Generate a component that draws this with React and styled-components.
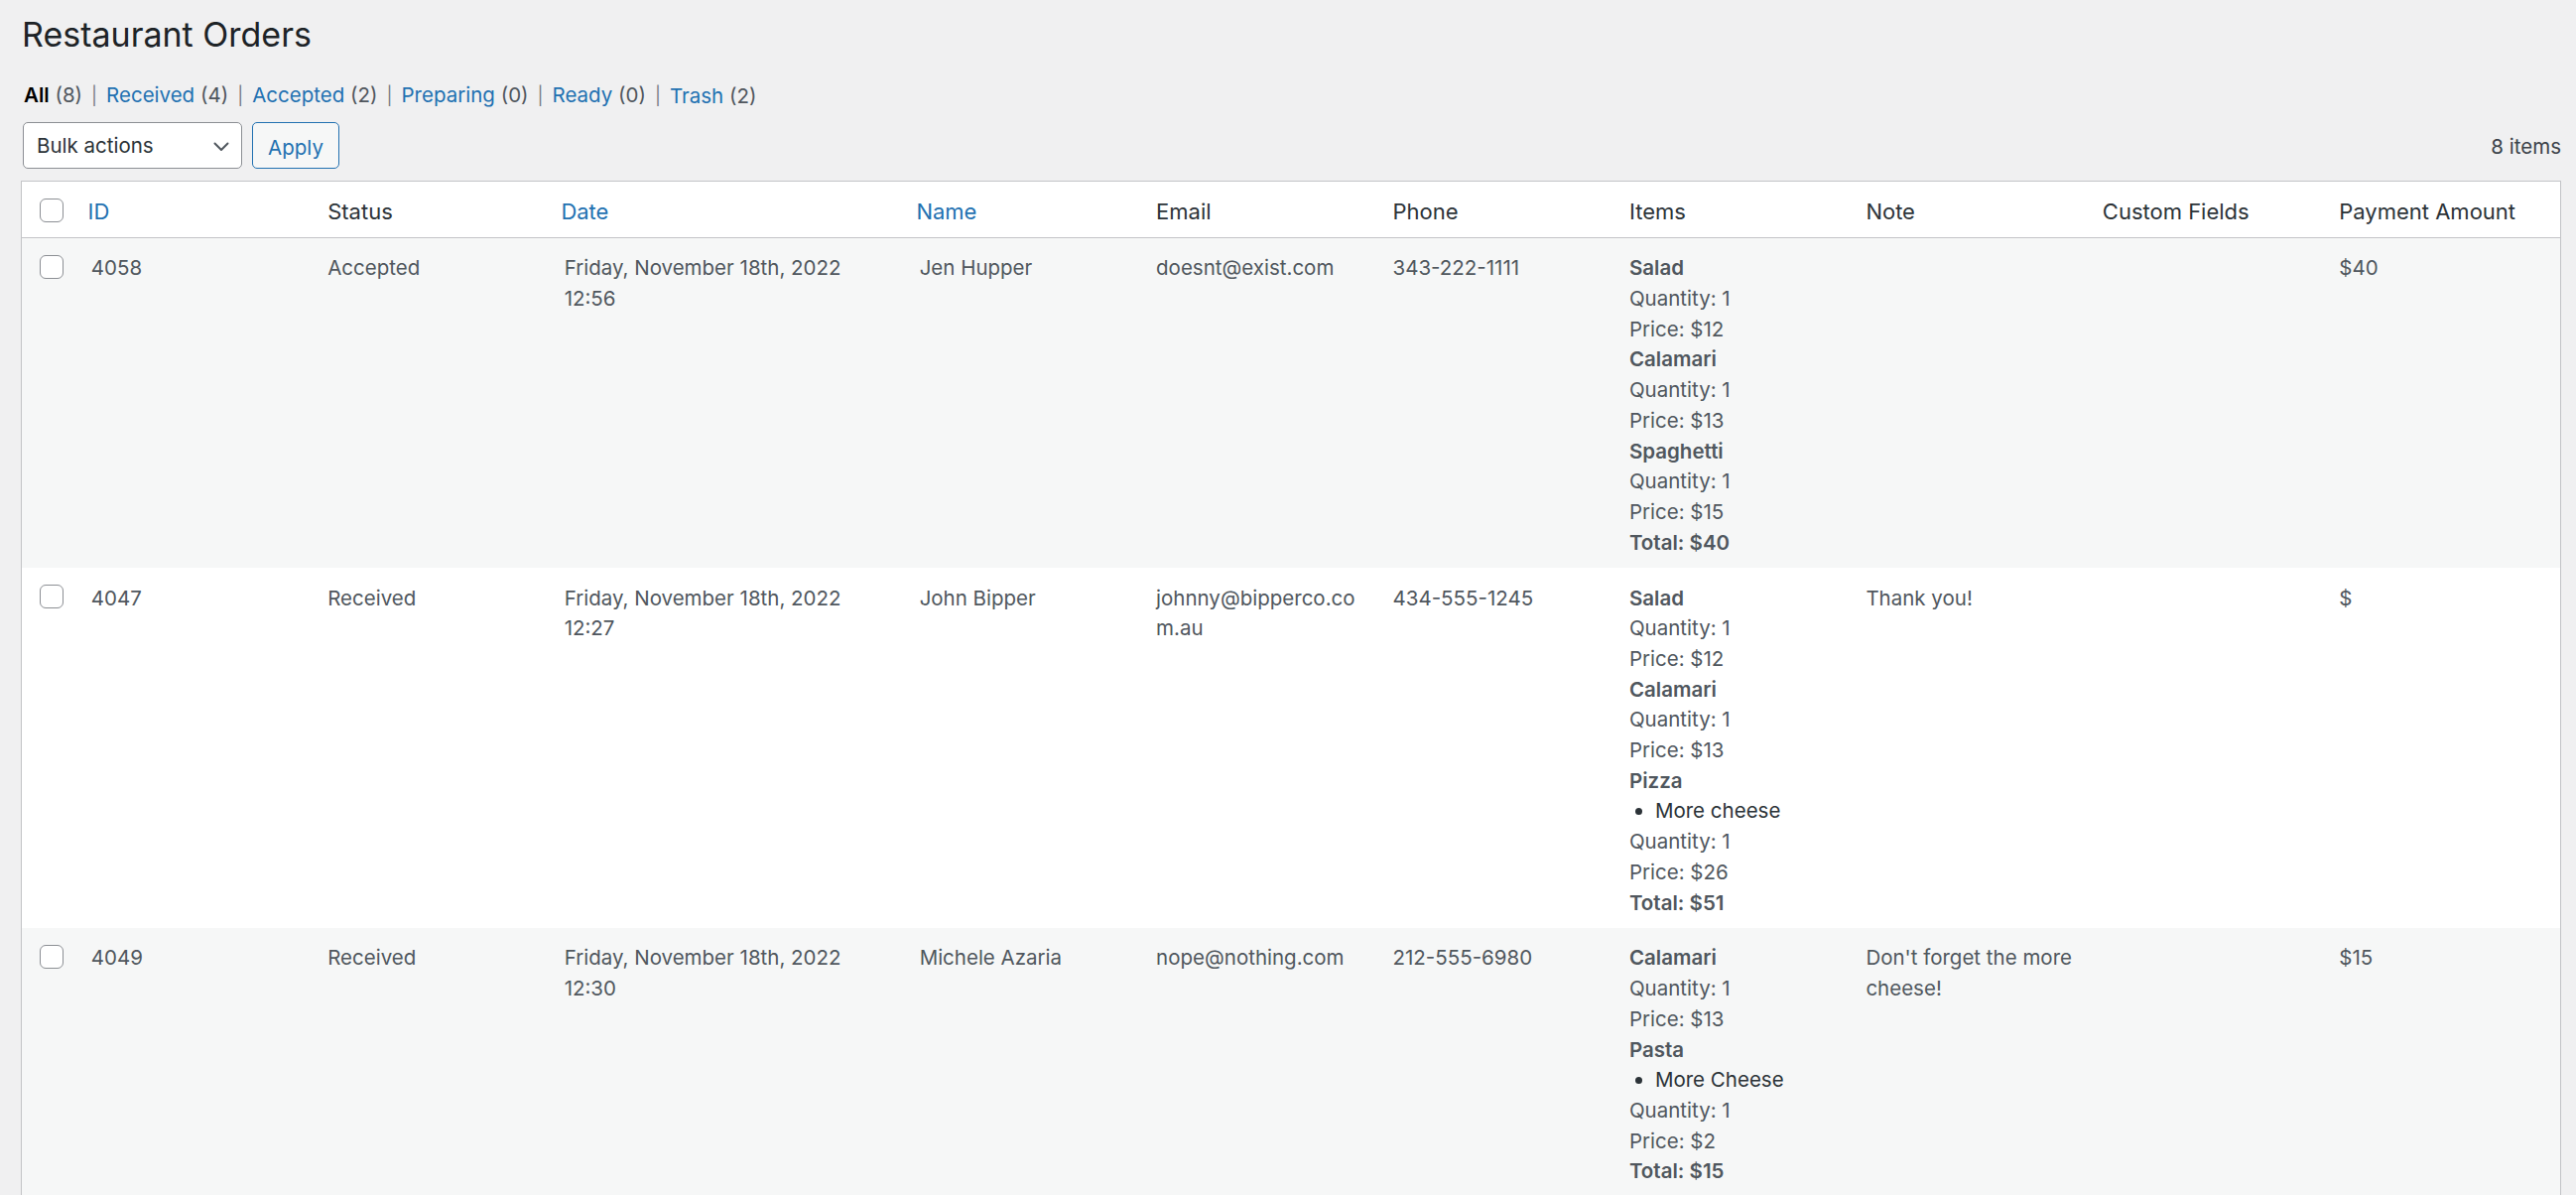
import React from "react";
import styled, { createGlobalStyle } from "styled-components";

const GlobalStyle = createGlobalStyle`
  html, body { margin: 0; padding: 0; }
  body {
    background: #f0f0f1;
    font-family: Inter, "Noto Sans", Roboto, sans-serif;
    color: #3c434a;
    font-size: 20.5px;
    line-height: 1.5;
  }
  * { box-sizing: border-box; }
`;

const Wrap = styled.div`
  padding: 13px 15px 0 21px;
`;

const Title = styled.h1`
  margin: 0;
  font-size: 34px;
  line-height: 44px;
  font-weight: 400;
  color: #1d2327;
  padding-left: 1px;
`;

const Filters = styled.ul`
  list-style: none;
  margin: 24px 0 0;
  padding: 0 0 0 3px;
  display: flex;
  align-items: center;
  font-size: 20.5px;
  line-height: 30.7px;
  color: #646970;
`;

const FilterItem = styled.li`
  white-space: pre;
`;

const FilterLink = styled.a`
  color: ${(p) => (p.$current ? "#000" : "#2271b1")};
  font-weight: ${(p) => (p.$current ? 600 : 400)};
  text-decoration: none;
`;

const Count = styled.span`
  color: #50575e;
`;

const Sep = styled.span`
  color: #787c82;
  padding: 0 9px;
  font-size: 18px;
`;

const Toolbar = styled.div`
  margin-top: 10px;
  display: flex;
  align-items: center;
  gap: 10px;
  height: 48px;
  padding-left: 2px;
`;

const Select = styled.div`
  width: 221px;
  height: 47px;
  border: 1px solid #8c8f94;
  border-radius: 5px;
  background: #fff;
  color: #2c3338;
  display: flex;
  align-items: center;
  justify-content: space-between;
  padding: 2px 12px 0 13px;
  font-size: 20.5px;
`;

const Button = styled.button`
  height: 47px;
  width: 88px;
  border: 1px solid #2271b1;
  border-radius: 5px;
  background: #f6f7f7;
  color: #2271b1;
  font-family: inherit;
  font-size: 20.5px;
  padding: 3px 0 0;
`;

const ItemsCount = styled.div`
  margin-left: auto;
  padding-top: 3px;
  color: #3c434a;
  font-size: 20.5px;
`;

const Table = styled.table`
  margin-top: 11px;
  width: 100%;
  table-layout: fixed;
  border-collapse: separate;
  border-spacing: 0;
  border: 1px solid #c3c4c7;
  background: #fff;
  box-shadow: 0 1px 1px rgba(0, 0, 0, 0.04);
`;

const Th = styled.th`
  text-align: left;
  font-weight: 400;
  font-size: 22px;
  line-height: 30.8px;
  padding: 15.6px ${(p) => (p.$sortable ? "12.5px" : "15.75px")} 9.6px;
  color: ${(p) => (p.$sortable ? "#2271b1" : "#2c3338")};
  border-bottom: 1px solid #c3c4c7;
  vertical-align: middle;
  white-space: nowrap;
`;

const CheckTh = styled.th`
  padding: 3px 0 0 18px;
  border-bottom: 1px solid #c3c4c7;
  vertical-align: middle;
  text-align: left;
`;

const Row = styled.tr`
  background: ${(p) => (p.$odd ? "#f6f7f7" : "#fff")};
`;

const Td = styled.td`
  padding: 15.6px ${(p) => (p.$tight ? "9px" : "15.75px")} 9.6px 15.75px;
  vertical-align: top;
  color: #50575e;
  font-size: 20.5px;
  line-height: 30.7px;
  overflow-wrap: break-word;
`;

const CheckTd = styled.td`
  padding: 17.5px 0 0 18px;
  vertical-align: top;
`;

const Box = styled.input.attrs({ type: "checkbox" })`
  appearance: none;
  -webkit-appearance: none;
  display: block;
  margin: 0;
  width: 24px;
  height: 24px;
  border: 1px solid #8c8f94;
  border-radius: 6px;
  background: #fff;
`;

const ItemName = styled.div`
  font-weight: 600;
`;

const Options = styled.ul`
  margin: 0;
  padding: 0 0 0 26px;
  list-style: disc;
  color: #2c3338;
`;

const Line = styled.div``;

const Chevron = () => (
  <svg width="16" height="10" viewBox="0 0 16 10" fill="none">
    <polyline points="1.5,1.5 8,8 14.5,1.5" stroke="#50575e" strokeWidth="2" strokeLinecap="round" strokeLinejoin="round" />
  </svg>
);

const filters = [
  { label: "All", count: 8, current: true },
  { label: "Received", count: 4 },
  { label: "Accepted", count: 2 },
  { label: "Preparing", count: 0 },
  { label: "Ready", count: 0 },
  { label: "Trash", count: 2 },
];

const columns = [
  { key: "id", label: "ID", sortable: true },
  { key: "status", label: "Status" },
  { key: "date", label: "Date", sortable: true, width: 358 },
  { key: "name", label: "Name", sortable: true },
  { key: "email", label: "Email" },
  { key: "phone", label: "Phone" },
  { key: "items", label: "Items" },
  { key: "note", label: "Note" },
  { key: "custom", label: "Custom Fields" },
  { key: "payment", label: "Payment Amount" },
];

const orders = [
  {
    id: "4058",
    status: "Accepted",
    date: "Friday, November 18th, 2022",
    time: "12:56",
    name: "Jen Hupper",
    email: ["doesnt@exist.com"],
    phone: "343-222-1111",
    items: [
      { name: "Salad", qty: 1, price: 12 },
      { name: "Calamari", qty: 1, price: 13 },
      { name: "Spaghetti", qty: 1, price: 15 },
    ],
    total: 40,
    note: "",
    payment: "$40",
  },
  {
    id: "4047",
    status: "Received",
    date: "Friday, November 18th, 2022",
    time: "12:27",
    name: "John Bipper",
    email: ["johnny@bipperco.co", "m.au"],
    phone: "434-555-1245",
    items: [
      { name: "Salad", qty: 1, price: 12 },
      { name: "Calamari", qty: 1, price: 13 },
      { name: "Pizza", options: ["More cheese"], qty: 1, price: 26 },
    ],
    total: 51,
    note: "Thank you!",
    payment: "$",
  },
  {
    id: "4049",
    status: "Received",
    date: "Friday, November 18th, 2022",
    time: "12:30",
    name: "Michele Azaria",
    email: ["nope@nothing.com"],
    phone: "212-555-6980",
    items: [
      { name: "Calamari", qty: 1, price: 13 },
      { name: "Pasta", options: ["More Cheese"], qty: 1, price: 2 },
    ],
    total: 15,
    note: "Don't forget the more cheese!",
    payment: "$15",
  },
];

export default function App() {
  return (
    <>
      <GlobalStyle />
      <Wrap>
        <Title>Restaurant Orders</Title>
        <Filters>
          {filters.map((f, i) => (
            <FilterItem key={f.label}>
              <FilterLink href="#" $current={f.current}>{f.label}</FilterLink>{" "}
              <Count>({f.count})</Count>
              {i < filters.length - 1 && <Sep>|</Sep>}
            </FilterItem>
          ))}
        </Filters>
        <Toolbar>
          <Select>
            <span>Bulk actions</span>
            <Chevron />
          </Select>
          <Button>Apply</Button>
          <ItemsCount>8 items</ItemsCount>
        </Toolbar>
        <Table>
          <colgroup>
            <col style={{ width: 54 }} />
            {columns.map((c) => (
              <col key={c.key} style={c.width ? { width: c.width } : undefined} />
            ))}
          </colgroup>
          <thead>
            <tr>
              <CheckTh>
                <Box />
              </CheckTh>
              {columns.map((c) => (
                <Th key={c.key} $sortable={c.sortable}>{c.label}</Th>
              ))}
            </tr>
          </thead>
          <tbody>
            {orders.map((o, idx) => (
              <Row key={o.id} $odd={idx % 2 === 0}>
                <CheckTd>
                  <Box />
                </CheckTd>
                <Td>{o.id}</Td>
                <Td>{o.status}</Td>
                <Td>
                  <Line>{o.date}</Line>
                  <Line>{o.time}</Line>
                </Td>
                <Td>{o.name}</Td>
                <Td>
                  {o.email.map((e) => (
                    <Line key={e}>{e}</Line>
                  ))}
                </Td>
                <Td>{o.phone}</Td>
                <Td>
                  {o.items.map((it) => (
                    <div key={it.name}>
                      <ItemName>{it.name}</ItemName>
                      {it.options && (
                        <Options>
                          {it.options.map((op) => (
                            <li key={op}>{op}</li>
                          ))}
                        </Options>
                      )}
                      <Line>Quantity: {it.qty}</Line>
                      <Line>Price: ${it.price}</Line>
                    </div>
                  ))}
                  <ItemName>Total: ${o.total}</ItemName>
                </Td>
                <Td $tight>{o.note}</Td>
                <Td></Td>
                <Td>{o.payment}</Td>
              </Row>
            ))}
          </tbody>
        </Table>
      </Wrap>
    </>
  );
}
